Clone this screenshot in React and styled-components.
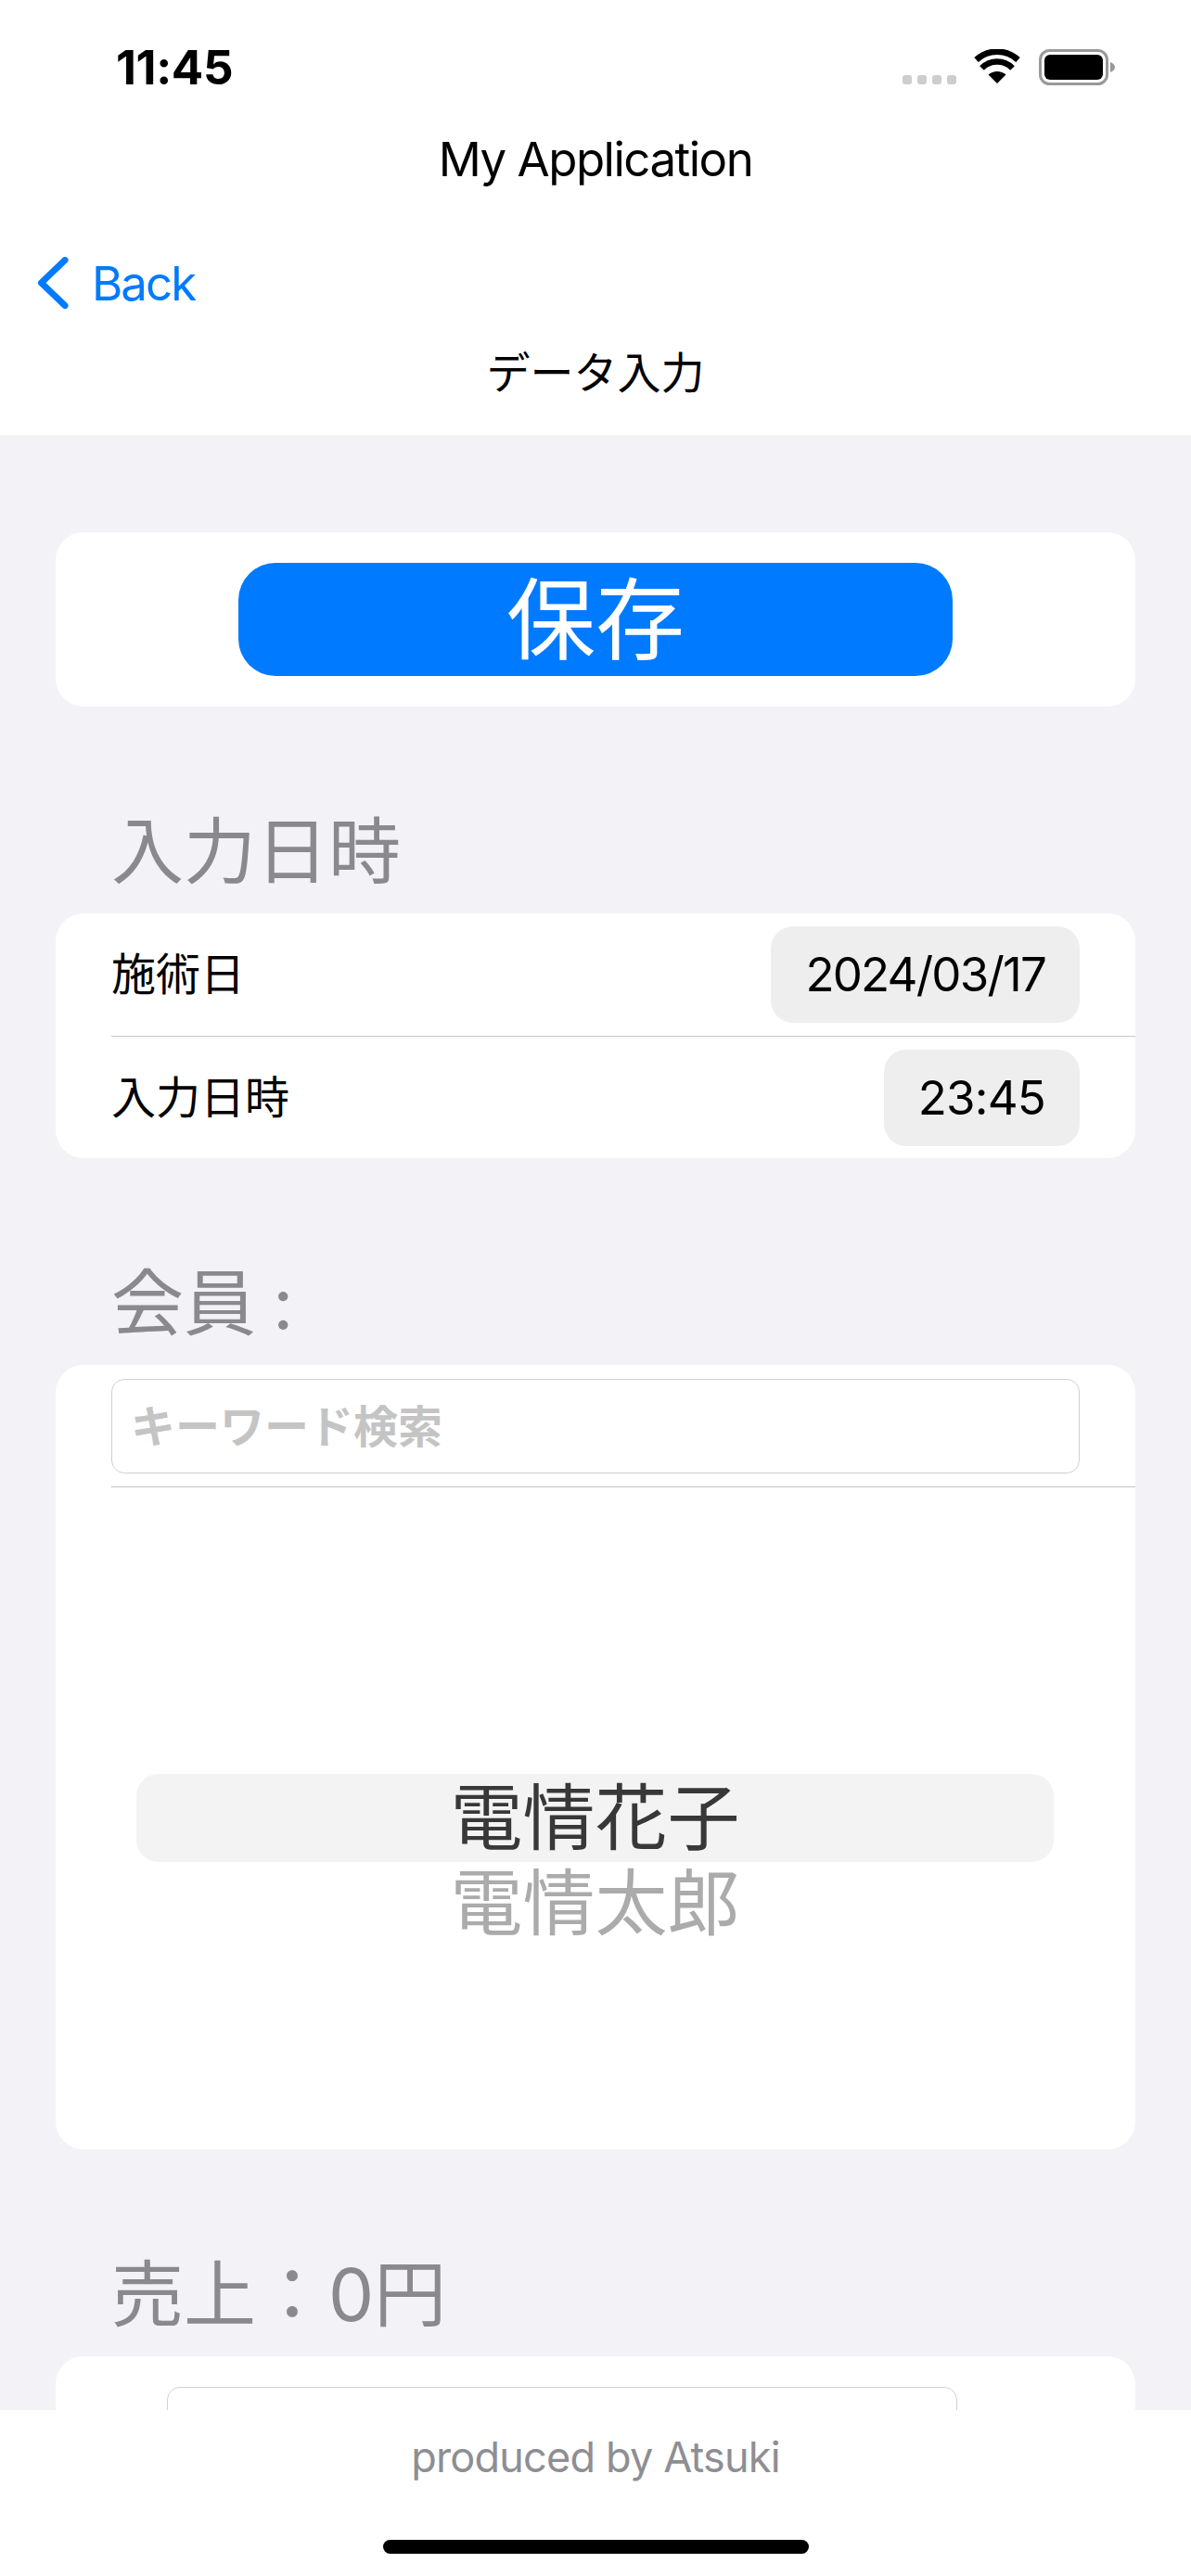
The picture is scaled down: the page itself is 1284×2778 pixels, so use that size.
import styled, { createGlobalStyle } from 'styled-components';

const GlobalStyle = createGlobalStyle`
  html, body {
    margin: 0;
    padding: 0;
    background: #fff;
  }
  * {
    box-sizing: border-box;
  }
`;

const FONT = `Inter, "Noto Sans CJK JP", sans-serif`;

const Page = styled.div`
  display: flex;
  flex-direction: column;
  width: 1284px;
  height: 2778px;
  overflow: hidden;
  font-family: ${FONT};
  color: #000;
  background: #fff;
`;

const Header = styled.header`
  flex: none;
  height: 469px;
  background: #fff;
`;

const StatusBar = styled.div`
  display: flex;
  justify-content: space-between;
  height: 126px;
  padding: 44px 82px 0 125px;
`;

const Clock = styled.span`
  font-size: 51px;
  font-weight: 700;
  line-height: 58px;
  letter-spacing: -0.4px;
`;

const StatusIcons = styled.div`
  display: flex;
  align-items: flex-start;
  padding-top: 9px;
`;

const SignalDots = styled.div`
  display: flex;
  gap: 6px;
  margin: 28px 19px 0 0;
`;

const SignalDot = styled.i`
  width: 10px;
  height: 10px;
  border-radius: 3px;
  background: #cdcdcd;
`;

const AppTitle = styled.div`
  height: 92px;
  font-size: 51px;
  line-height: 92px;
  letter-spacing: -1.5px;
  text-align: center;
`;

const BackLink = styled.a`
  display: flex;
  align-items: center;
  gap: 25px;
  height: 86px;
  margin-top: 44px;
  padding-left: 40px;
  font-size: 51px;
  letter-spacing: -2px;
  color: #007aff;
`;

const ScreenTitle = styled.div`
  height: 74px;
  margin-top: 17px;
  font-size: 47px;
  line-height: 74px;
  text-align: center;
`;

const Scroller = styled.main`
  flex: 1;
  min-height: 0;
  overflow: hidden;
  padding: 105px 60px 0;
  background: #f2f2f7;
`;

const Card = styled.section`
  background: #fff;
  border-radius: 30px;
`;

const SaveCard = styled(Card)`
  display: flex;
  justify-content: center;
  padding: 33px 0;
`;

const SaveButton = styled.button`
  width: 770px;
  height: 122px;
  border: 0;
  border-radius: 40px;
  background: #007aff;
  color: #fff;
  font-family: ${FONT};
  font-size: 96px;
  line-height: 122px;
  padding: 0;
`;

const SectionTitle = styled.h2`
  height: 100px;
  margin: 104px 0 19px;
  padding-left: 60px;
  color: #8a8a8e;
  font-size: 78px;
  font-weight: 400;
  line-height: 106px;
  word-spacing: -4px;
`;

const Row = styled.div`
  display: flex;
  align-items: center;
  justify-content: space-between;
  margin-left: 60px;
  padding: 14px 60px ${({ $divider }) => ($divider ? '14px' : '13px')} 0;
  border-bottom: ${({ $divider }) => ($divider ? '1px solid #c6c6c8' : '0')};
`;

const RowLabel = styled.span`
  font-size: 48px;
  line-height: 70px;
`;

const ValuePill = styled.span`
  height: 104px;
  padding: 0 37px;
  border-radius: 24px;
  background: #eeeeef;
  font-size: 51px;
  line-height: 104px;
  letter-spacing: ${({ $tracking }) => $tracking};
`;

const SearchRow = styled.div`
  margin-left: 60px;
  padding: 15px 60px 14px 0;
  border-bottom: 1px solid #c6c6c8;
`;

const TextInput = styled.input`
  display: block;
  width: 100%;
  height: 102px;
  padding: 0 20px;
  border: 1px solid #d0d0d0;
  border-radius: 14px;
  outline: 0;
  background: #fff;
  font-family: ${FONT};
  font-size: 48px;
  font-weight: 700;

  &::placeholder {
    color: #c4c4c4;
    opacity: 1;
  }
`;

const Picker = styled.div`
  display: flex;
  flex-direction: column;
  height: 714px;
  padding: 309px 88px 0 87px;
`;

const PickerOption = styled.div`
  flex: none;
  height: ${({ $selected }) => ($selected ? '95px' : '84px')};
  border-radius: 24px;
  background: ${({ $selected }) => ($selected ? '#f3f3f3' : 'transparent')};
  color: ${({ $selected }) => ($selected ? '#383838' : '#ababab')};
  font-size: 78px;
  line-height: ${({ $selected }) => ($selected ? '95px' : '90px')};
  text-align: center;
`;

const SalesCard = styled(Card)`
  height: 400px;
  padding: 33px 192px 0 120px;
`;

const SalesInput = styled(TextInput)`
  height: 200px;
`;

const Footer = styled.footer`
  flex: none;
  display: flex;
  flex-direction: column;
  align-items: center;
  height: 179px;
  background: #fff;
`;

const Credit = styled.div`
  height: 102px;
  margin-bottom: 38px;
  color: #8e8e93;
  font-size: 45px;
  line-height: 102px;
  letter-spacing: -0.8px;
`;

const HomeIndicator = styled.div`
  width: 459px;
  height: 15px;
  border-radius: 8px;
  background: #000;
`;

const WifiIcon = () => (
  <svg width="50" height="37" viewBox="0 0 50 37" style={{ marginRight: 20 }}>
    <path d="M25 37 L15.5 27.6 A14 14 0 0 1 34.5 27.6 Z" fill="#000" />
    <path d="M8.5 20.5 A23 23 0 0 1 41.5 20.5" fill="none" stroke="#000" strokeWidth="6.5" />
    <path d="M2.5 11.5 A33 33 0 0 1 47.5 11.5" fill="none" stroke="#000" strokeWidth="6.5" />
  </svg>
);

const BatteryIcon = () => (
  <svg width="82" height="39" viewBox="0 0 82 39">
    <rect x="1.5" y="1.5" width="72" height="36" rx="10" fill="none" stroke="#999" strokeWidth="3" />
    <rect x="6" y="6" width="63" height="27" rx="6" fill="#000" />
    <path d="M77 14 C80 15 82 17 82 19.5 C82 22 80 24 77 25 Z" fill="#999" />
  </svg>
);

const BackChevron = () => (
  <svg width="34" height="56" viewBox="0 0 34 56">
    <path
      d="M30 3.5 L4.5 28 L30 52.5"
      fill="none"
      stroke="#007aff"
      strokeWidth="7"
      strokeLinecap="round"
      strokeLinejoin="round"
    />
  </svg>
);

const App = () => {
  return (
    <Page>
      <GlobalStyle />
      <Header>
        <StatusBar>
          <Clock>11:45</Clock>
          <StatusIcons>
            <SignalDots>
              <SignalDot />
              <SignalDot />
              <SignalDot />
              <SignalDot />
            </SignalDots>
            <WifiIcon />
            <BatteryIcon />
          </StatusIcons>
        </StatusBar>
        <AppTitle>My Application</AppTitle>
        <BackLink>
          <BackChevron />
          Back
        </BackLink>
        <ScreenTitle>データ入力</ScreenTitle>
      </Header>

      <Scroller>
        <SaveCard>
          <SaveButton>保存</SaveButton>
        </SaveCard>

        <SectionTitle>入力日時</SectionTitle>
        <Card>
          <Row $divider>
            <RowLabel>施術日</RowLabel>
            <ValuePill $tracking="-1.8px">2024/03/17</ValuePill>
          </Row>
          <Row>
            <RowLabel>入力日時</RowLabel>
            <ValuePill $tracking="-0.8px">23:45</ValuePill>
          </Row>
        </Card>

        <SectionTitle>会員 :</SectionTitle>
        <Card>
          <SearchRow>
            <TextInput placeholder="キーワード検索" readOnly />
          </SearchRow>
          <Picker>
            <PickerOption $selected>電情花子</PickerOption>
            <PickerOption>電情太郎</PickerOption>
          </Picker>
        </Card>

        <SectionTitle>売上：0円</SectionTitle>
        <SalesCard>
          <SalesInput readOnly />
        </SalesCard>
      </Scroller>

      <Footer>
        <Credit>produced by Atsuki</Credit>
        <HomeIndicator />
      </Footer>
    </Page>
  );
};

export default App;
